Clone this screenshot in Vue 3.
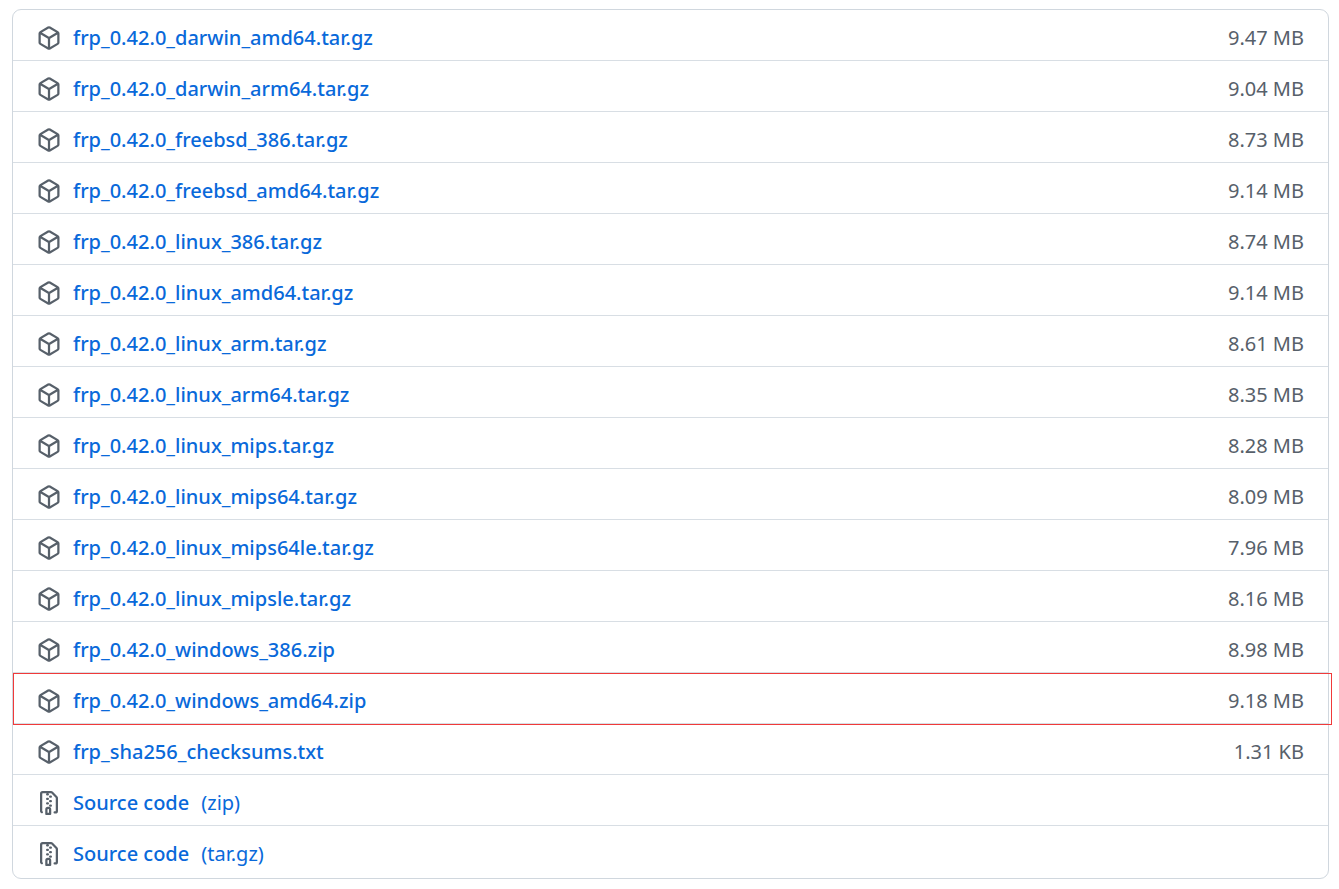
<script setup>
const files = [
  { name: 'frp_0.42.0_darwin_amd64.tar.gz', size: '9.47 MB' },
  { name: 'frp_0.42.0_darwin_arm64.tar.gz', size: '9.04 MB' },
  { name: 'frp_0.42.0_freebsd_386.tar.gz', size: '8.73 MB' },
  { name: 'frp_0.42.0_freebsd_amd64.tar.gz', size: '9.14 MB' },
  { name: 'frp_0.42.0_linux_386.tar.gz', size: '8.74 MB' },
  { name: 'frp_0.42.0_linux_amd64.tar.gz', size: '9.14 MB' },
  { name: 'frp_0.42.0_linux_arm.tar.gz', size: '8.61 MB' },
  { name: 'frp_0.42.0_linux_arm64.tar.gz', size: '8.35 MB' },
  { name: 'frp_0.42.0_linux_mips.tar.gz', size: '8.28 MB' },
  { name: 'frp_0.42.0_linux_mips64.tar.gz', size: '8.09 MB' },
  { name: 'frp_0.42.0_linux_mips64le.tar.gz', size: '7.96 MB' },
  { name: 'frp_0.42.0_linux_mipsle.tar.gz', size: '8.16 MB' },
  { name: 'frp_0.42.0_windows_386.zip', size: '8.98 MB' },
  { name: 'frp_0.42.0_windows_amd64.zip', size: '9.18 MB', marked: true },
  { name: 'frp_sha256_checksums.txt', size: '1.31 KB' },
  { name: 'Source code', format: '(zip)' },
  { name: 'Source code', format: '(tar.gz)' },
]

const packageIcon =
  'M8.878.392a1.75 1.75 0 00-1.756 0l-5.25 3.045A1.75 1.75 0 001 4.951v6.098c0 .624.332 1.2.872 1.514l5.25 3.045a1.75 1.75 0 001.756 0l5.25-3.045c.54-.313.872-.89.872-1.514V4.951c0-.624-.332-1.2-.872-1.514L8.878.392zM7.875 1.69a.25.25 0 01.25 0l4.63 2.685L8 7.133 3.245 4.375l4.63-2.685zM2.5 5.677v5.372c0 .09.047.171.125.216l4.625 2.683V8.432L2.5 5.677zm6.25 8.271l4.625-2.683a.25.25 0 00.125-.216V5.677L8.75 8.432v5.516z'
const zipIcon =
  'M3.5 1.75a.25.25 0 01.25-.25h3a.75.75 0 000 1.5h.5a.75.75 0 000-1.5h2.086a.25.25 0 01.177.073l2.914 2.914a.25.25 0 01.073.177v8.586a.25.25 0 01-.25.25h-.5a.75.75 0 000 1.5h.5A1.75 1.75 0 0014 13.25V4.664c0-.464-.184-.909-.513-1.237L10.573.513A1.75 1.75 0 009.336 0H3.75A1.75 1.75 0 002 1.75v11.5c0 .649.353 1.214.874 1.515a.75.75 0 10.752-1.298.25.25 0 01-.126-.217V1.75zM8.75 3a.75.75 0 000 1.5h.5a.75.75 0 000-1.5h-.5zM6 5.25a.75.75 0 01.75-.75h.5a.75.75 0 010 1.5h-.5A.75.75 0 016 5.25zm2 1.5A.75.75 0 018.75 6h.5a.75.75 0 010 1.5h-.5A.75.75 0 018 6.75zm-1.25.75a.75.75 0 000 1.5h.5a.75.75 0 000-1.5h-.5zM8 9.75A.75.75 0 018.75 9h.5a.75.75 0 010 1.5h-.5A.75.75 0 018 9.75zm-.75.75a1.75 1.75 0 00-1.75 1.75v3c0 .414.336.75.75.75h2.5a.75.75 0 00.75-.75v-3a1.75 1.75 0 00-1.75-1.75h-.5zM7 12.25a.25.25 0 01.25-.25h.5a.25.25 0 01.25.25v2.25H7v-2.25z'
</script>

<template>
  <main class="page">
    <ul class="assets">
      <li v-for="file in files" :key="file.name + (file.format || '')" class="row" :class="{ marked: file.marked }">
        <svg class="icon" viewBox="0 0 16 16" aria-hidden="true">
          <path fill-rule="evenodd" :d="file.format ? zipIcon : packageIcon" />
        </svg>
        <a class="link" href="#">
          <span class="name">{{ file.name }}</span>
          <span v-if="file.format" class="format">{{ file.format }}</span>
        </a>
        <span v-if="file.size" class="size">{{ file.size }}</span>
      </li>
    </ul>
  </main>
</template>

<style>
body {
  margin: 0;
  background: #fff;
}
</style>

<style scoped>
.page {
  padding: 9px 10px 10px 12px;
  font-family: "Segoe UI", "Noto Sans", "Open Sans", sans-serif;
  font-size: 20px;
  line-height: 30px;
}
.assets {
  list-style: none;
  margin: 0;
  padding: 0;
  border: 1px solid #d0d7de;
  border-radius: 9px;
}
.row {
  position: relative;
  display: flex;
  align-items: center;
  padding: 13px 24px 7px;
  border-bottom: 1px solid #d8dee4;
}
.row:last-child {
  border-bottom: 0;
  padding-bottom: 9px;
}
.marked::after {
  content: "";
  position: absolute;
  inset: 0 -4px -2px 0;
  border: 1px solid #f03a3a;
  pointer-events: none;
}
.icon {
  flex: none;
  width: 24px;
  height: 24px;
  margin-right: 12px;
  fill: #57606a;
}
.link {
  display: flex;
  gap: 12px;
  color: #0969da;
  text-decoration: none;
}
.name {
  font-weight: 500;
}
.size {
  margin-left: auto;
  color: #57606a;
}
</style>
